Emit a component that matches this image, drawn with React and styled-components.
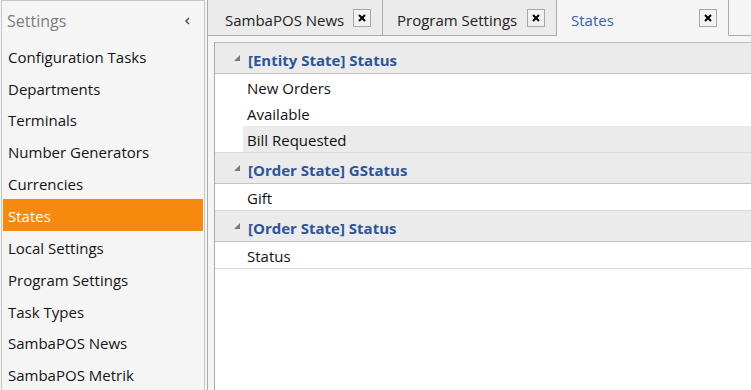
import React from 'react';
import styled, { createGlobalStyle } from 'styled-components';

const Global = createGlobalStyle`
  html, body { margin: 0; padding: 0; }
  body {
    background: #f5f5f5;
    font-family: "Open Sans", "Noto Sans", sans-serif;
    overflow: hidden;
  }
`;

const Shell = styled.div`
  display: flex;
  width: 751px;
  height: 390px;
  overflow: hidden;
  background: #f5f5f5;
`;

const Sidebar = styled.aside`
  flex-shrink: 0;
  width: 200px;
  margin-left: 1px;
  padding: 0 1px;
  border: 1px solid #c6c6c6;
  border-bottom: none;
  background: #f5f5f5;
  display: flex;
  flex-direction: column;
`;

const SideHeader = styled.div`
  box-sizing: border-box;
  height: 39px;
  display: flex;
  align-items: center;
  justify-content: space-between;
  padding: 2px 12px 0 4px;
  font-size: 16px;
  color: #7d7d7d;
`;

const SideItem = styled.div`
  box-sizing: border-box;
  height: 32px;
  line-height: 28px;
  padding: 3px 0 0 5px;
  font-size: 15px;
  color: ${p => (p.$active ? '#ffffff' : '#141414')};
  background: ${p => (p.$active ? '#f68a0e' : 'transparent')};
  white-space: nowrap;
`;

const Main = styled.div`
  flex: 1;
  min-width: 0;
  margin-left: 2px;
  display: flex;
  flex-direction: column;
`;

const TabStrip = styled.div`
  display: flex;
  height: 36px;
  flex-shrink: 0;
`;

const Tab = styled.div`
  box-sizing: border-box;
  flex-shrink: 0;
  width: ${p => p.$w}px;
  height: 36px;
  display: flex;
  align-items: center;
  padding: 1px 11px 0 ${p => (p.$first ? 17 : 14)}px;
  border-right: 1px solid #ababab;
  border-left: ${p => (p.$first ? '1px solid #ababab' : 'none')};
  border-bottom: ${p => (p.$active ? '1px solid transparent' : '1px solid #ababab')};
  background: ${p => (p.$active ? '#f5f5f5' : '#ebebeb')};
  font-size: 15px;
  color: ${p => (p.$active ? '#3a62a9' : '#222')};
  white-space: nowrap;
`;

const TabLabel = styled.span`
  flex: 1;
  padding-top: 3px;
`;

const CloseBox = styled.span`
  box-sizing: border-box;
  width: 18px;
  height: 18px;
  border: 1px solid #a8a8a8;
  background: #f2f2f2;
  display: flex;
  align-items: center;
  justify-content: center;
`;

const StripFill = styled.div`
  flex: 1;
  border-bottom: 1px solid #ababab;
`;

const Panel = styled.div`
  flex: 1;
  display: flex;
  padding: 6px 0 0 6px;
  border-left: 1px solid #ababab;
  background: #f5f5f5;
`;

const List = styled.div`
  flex: 1;
  background: #ffffff;
  border-left: 1px solid #a9a9a9;
  border-top: 1px solid #bdbdbd;
`;

const GroupHeader = styled.div`
  box-sizing: border-box;
  height: 31px;
  display: flex;
  align-items: center;
  gap: 8px;
  padding: 3px 0 0 19px;
  background: #ebebeb;
  border-bottom: 1px solid #c4c4c4;
  font-size: 15px;
  font-weight: 700;
  color: #2e5597;
`;

const GroupItems = styled.div`
  border-bottom: 1px solid #d9d9d9;
`;

const Item = styled.div`
  box-sizing: border-box;
  height: 26px;
  line-height: 24px;
  padding: 2px 0 0 4px;
  margin-left: 28px;
  font-size: 15px;
  color: #111;
  background: ${p => (p.$selected ? '#ebebeb' : 'transparent')};
`;

const Chevron = () => (
  <svg width="7" height="8" viewBox="0 0 7 8">
    <polyline points="5,1 2,4 5,7" fill="none" stroke="#555" strokeWidth="1.6" />
  </svg>
);

const CloseIcon = () => (
  <svg width="8" height="8" viewBox="0 0 8 8">
    <path d="M1 1 L7 7 M7 1 L1 7" stroke="#000" strokeWidth="2" fill="none" />
  </svg>
);

const Expander = () => (
  <svg width="6" height="6" viewBox="0 0 6 6" style={{ marginTop: '-3px' }}>
    <polygon points="6,0 6,6 0,6" fill="#7a7a7a" />
  </svg>
);

const sideItems = [
  'Configuration Tasks',
  'Departments',
  'Terminals',
  'Number Generators',
  'Currencies',
  'States',
  'Local Settings',
  'Program Settings',
  'Task Types',
  'SambaPOS News',
  'SambaPOS Metrik',
];

const tabs = [
  { label: 'SambaPOS News', w: 176 },
  { label: 'Program Settings', w: 174 },
  { label: 'States', w: 172, active: true },
];

const groups = [
  { title: '[Entity State] Status', items: ['New Orders', 'Available', 'Bill Requested'], selected: 'Bill Requested' },
  { title: '[Order State] GStatus', items: ['Gift'] },
  { title: '[Order State] Status', items: ['Status'] },
];

export default function App() {
  return (
    <>
      <Global />
      <Shell>
        <Sidebar>
          <SideHeader>
            <span>Settings</span>
            <Chevron />
          </SideHeader>
          {sideItems.map(s => (
            <SideItem key={s} $active={s === 'States'}>{s}</SideItem>
          ))}
        </Sidebar>
        <Main>
          <TabStrip>
            {tabs.map((t, i) => (
              <Tab key={t.label} $w={t.w} $first={i === 0} $active={t.active}>
                <TabLabel>{t.label}</TabLabel>
                <CloseBox><CloseIcon /></CloseBox>
              </Tab>
            ))}
            <StripFill />
          </TabStrip>
          <Panel>
            <List>
              {groups.map(g => (
                <div key={g.title}>
                  <GroupHeader>
                    <Expander />
                    <span>{g.title}</span>
                  </GroupHeader>
                  <GroupItems>
                    {g.items.map(it => (
                      <Item key={it} $selected={it === g.selected}>{it}</Item>
                    ))}
                  </GroupItems>
                </div>
              ))}
            </List>
          </Panel>
        </Main>
      </Shell>
    </>
  );
}
